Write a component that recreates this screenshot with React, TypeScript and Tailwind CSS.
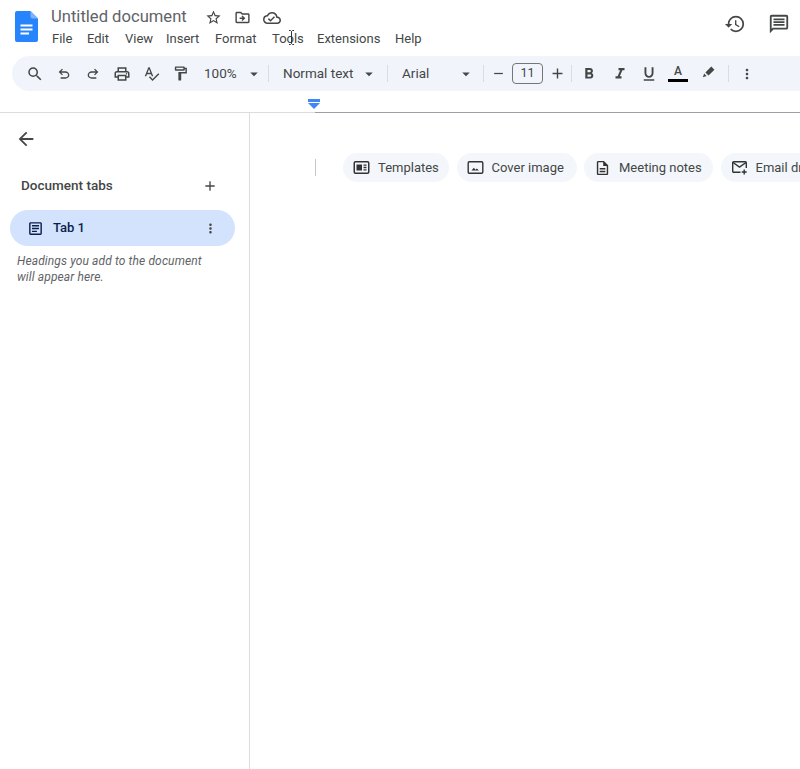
import React from "react";
import {
  MdStarBorder, MdOutlineDriveFileMove, MdOutlineCloudDone, MdHistory, MdOutlineMessage, MdSearch,
  MdOutlinePrint, MdOutlineSpellcheck, MdOutlineFormatPaint, MdArrowDropDown, MdRemove, MdAdd, MdFormatBold,
  MdFormatItalic, MdFormatUnderlined, MdMoreVert, MdArrowBack, MdOutlineArticle, MdOutlineDescription,
} from "react-icons/md";

const Sep = ({ className = "" }: { className?: string }) => <div className={`w-px h-[17px] bg-[#dadce0] shrink-0 ${className}`} />;

function Tool({ children, w = "w-[29px]" }: { children: React.ReactNode; w?: string }) {
  return <div className={`${w} h-[35px] shrink-0 flex items-center justify-center text-[#444746]`}>{children}</div>;
}

function Chip({ icon, label, w }: { icon: React.ReactNode; label: string; w: string }) {
  return (
    <div className={`${w} h-[29px] shrink-0 rounded-full bg-[#f3f6fb] flex items-center pl-[10px] gap-[8px] text-[#444746] text-[13px] whitespace-nowrap`}>
      <span className="w-[17px] flex justify-center shrink-0">{icon}</span>
      {label}
    </div>
  );
}

const UndoIcon = () => (
  <svg width="16" height="16" viewBox="0 -960 960 960" fill="#444746">
    <path d="M280-200v-80h284q63 0 109.5-40T720-420q0-60-46.5-100T564-560H312l104 104-56 56-200-200 200-200 56 56-104 104h252q97 0 166.5 63T800-420q0 94-69.5 157T564-200H280Z" />
  </svg>
);
const RedoIcon = () => (
  <svg width="16" height="16" viewBox="0 -960 960 960" fill="#444746">
    <path d="M396-200q-97 0-166.5-63T160-420q0-94 69.5-157T396-640h252L544-744l56-56 200 200-200 200-56-56 104-104H396q-63 0-109.5 40T240-420q0 60 46.5 100T396-280h284v80H396Z" />
  </svg>
);
const TemplateIcon = () => (
  <svg width="17" height="17" viewBox="0 0 17 17" fill="none" stroke="#333" strokeWidth="1.5">
    <rect x="1.25" y="2.75" width="14.5" height="11.5" rx="1.2" />
    <rect x="3.5" y="5.5" width="5.5" height="6" fill="#333" stroke="none" />
    <path d="M10.5 6.2h3M10.5 8.5h3M10.5 10.8h3" strokeWidth="1.3" />
  </svg>
);
const CoverIcon = () => (
  <svg width="17" height="17" viewBox="0 0 17 17" fill="none" stroke="#333" strokeWidth="1.4">
    <rect x="1.2" y="2.7" width="14.6" height="11.6" rx="1.2" />
    <path d="M4.5 11.6l2.3-2.8 1.7 2 1.3-1.3 2.2 2.1z" fill="#333" stroke="none" />
  </svg>
);
const EmailIcon = () => (
  <svg width="17" height="17" viewBox="0 0 17 17" fill="none" stroke="#333" strokeWidth="1.4">
    <path d="M9.5 13.3H2.7a1 1 0 0 1-1-1V3.7a1 1 0 0 1 1-1h11.6a1 1 0 0 1 1 1V9" />
    <path d="M2 3.5l6.5 4.6L15 3.5" />
    <path d="M13.2 10.5v5M10.7 13h5" />
  </svg>
);

export default function App() {
  const menus: [string, string][] = [["File", "w-[35px]"], ["Edit", "w-[38px]"], ["View", "w-[41px]"], ["Insert", "w-[49px]"], ["Format", "w-[57px]"], ["Tools", "w-[45px]"], ["Extensions", "w-[78px]"], ["Help", "w-[40px]"]];
  return (
    <div className="relative w-[800px] h-[769px] overflow-hidden bg-white flex flex-col font-['Roboto',sans-serif]">
      {/* Header */}
      <header className="h-[56px] shrink-0 flex">
        <div className="w-[51px] shrink-0 pl-[15px] pt-[11px]">
          <svg width="23" height="31" viewBox="0 0 23 31">
            <path d="M2 0h13.5L23 7.5V29a2 2 0 0 1-2 2H2a2 2 0 0 1-2-2V2a2 2 0 0 1 2-2z" fill="#2684fc" />
            <path d="M15.5 0L23 7.5h-5.5a2 2 0 0 1-2-2z" fill="#7fb2f8" />
            <path d="M5.5 14.5h12M5.5 18.5h12M5.5 22.5h8.5" stroke="#fff" strokeWidth="1.8" />
          </svg>
        </div>
        <div className="flex-1 flex flex-col pt-[7px]">
          <div className="flex items-center h-[21px]">
            <span className="w-[148px] text-[16.6px] text-[#5f6368] whitespace-nowrap">Untitled document</span>
            <span className="w-[29px] flex justify-center text-[#444746]"><MdStarBorder size={17} /></span>
            <span className="w-[29px] flex justify-center text-[#444746]"><MdOutlineDriveFileMove size={17} /></span>
            <span className="w-[29px] flex justify-center text-[#444746]"><MdOutlineCloudDone size={18} /></span>
          </div>
          <nav className="flex mt-[2px] h-[17px] pl-[1px] text-[13px] text-[#444746] items-center">
            {menus.map(([m, w]) => <span key={m} className={w}>{m}</span>)}
          </nav>
        </div>
        <div className="flex pt-[13px] text-[#444746] pr-[10px] gap-[22px]">
          <MdHistory size={22} />
          <MdOutlineMessage size={22} />
        </div>
      </header>

      {/* Toolbar */}
      <div className="ml-[12px] h-[35px] shrink-0 rounded-l-full bg-[#f1f5fb] flex items-center pl-[8.5px] text-[13.5px] text-[#444746]">
        <Tool><MdSearch size={18} /></Tool>
        <Tool><UndoIcon /></Tool>
        <Tool><RedoIcon /></Tool>
        <Tool><MdOutlinePrint size={18} /></Tool>
        <Tool><MdOutlineSpellcheck size={17} /></Tool>
        <Tool><MdOutlineFormatPaint size={17} /></Tool>
        <div className="w-[41px] ml-[9.5px] shrink-0">100%</div>
        <Tool w="w-[18px]"><MdArrowDropDown size={18} /></Tool>
        <Sep className="ml-[5px]" />
        <div className="w-[76px] ml-[14px] shrink-0">Normal text</div>
        <Tool w="w-[20px]"><MdArrowDropDown size={18} /></Tool>
        <Sep className="ml-[8px]" />
        <div className="w-[54px] ml-[14px] shrink-0">Arial</div>
        <Tool w="w-[20px]"><MdArrowDropDown size={18} /></Tool>
        <Sep className="ml-[7px]" />
        <Tool w="w-[28px]"><MdRemove size={15} /></Tool>
        <div className="w-[31px] h-[21px] shrink-0 border border-[#747775] rounded-[4px] flex items-center justify-center text-[12.5px]">11</div>
        <Tool w="w-[28px]"><MdAdd size={17} /></Tool>
        <Sep />
        <Tool w="w-[33px]"><MdFormatBold size={18} /></Tool>
        <Tool><MdFormatItalic size={18} /></Tool>
        <Tool><MdFormatUnderlined size={18} /></Tool>
        <Tool w="w-[30px]">
          <div className="flex flex-col items-center">
            <span className="text-[12px] leading-[13px] font-medium">A</span>
            <span className="w-[20px] h-[3px] bg-black mt-[1px]" />
          </div>
        </Tool>
        <Tool w="w-[31px]">
          <svg width="15" height="15" viewBox="0 0 24 24" className="-mt-[4px]" fill="#444746"><path d="M3 21l2-6 4 4-6 2zM7 13.5L16.5 4l5 5L12 18.5l-5-5z" /></svg>
        </Tool>
        <Sep className="ml-[4px]" />
        <Tool w="w-[35px]"><MdMoreVert size={16} /></Tool>
      </div>

      {/* Ruler */}
      <div className="h-[22px] shrink-0 flex flex-col justify-end">
        <div className="flex justify-start pl-[308px] pb-[3px]">
          <svg width="12" height="10" viewBox="0 0 12 10" fill="#4285f4"><rect x="0" y="0" width="12" height="3" /><path d="M0 4h12L6 10z" /></svg>
        </div>
        <div className="flex h-px">
          <div className="w-[315px] bg-[#dadce0]" />
          <div className="flex-1 bg-[#9aa0a6]" />
        </div>
      </div>

      {/* Body */}
      <div className="flex-1 flex min-h-0">
        <aside className="w-[250px] shrink-0 border-r border-[#dadce0] flex flex-col">
          <div className="h-[51px] pl-[15px] pt-[15px] text-[#444746]"><MdArrowBack size={22} /></div>
          <div className="mt-[12.5px] h-[18px] pl-[21px] pr-[31px] flex items-center justify-between text-[13.5px] font-medium text-[#444746]">
            <span>Document tabs</span>
            <MdAdd size={16} />
          </div>
          <div className="mt-[15.5px] mx-[10px] h-[36px] w-[225px] rounded-full bg-[#d3e3fd] flex items-center pl-[17px] pr-[17px] text-[#0b1f4b]">
            <MdOutlineArticle size={17} />
            <span className="ml-[9px] text-[13px] font-medium flex-1">Tab 1</span>
            <MdMoreVert size={15} className="text-[#444746]" />
          </div>
          <p className="mt-[8px] pl-[17px] text-[12px] leading-[15.5px] italic text-[#5f6368] tracking-[0.12px]">
            Headings you add to the document<br />will appear here.
          </p>
        </aside>
        <main className="flex-1 min-w-0 overflow-hidden">
          <div className="mt-[40px] flex items-center pl-[65px]">
            <div className="w-px h-[17px] bg-[#c4c7c5] shrink-0 mr-[27px]" />
            <div className="flex gap-[7.5px]">
              <Chip icon={<TemplateIcon />} label="Templates" w="w-[106px]" />
              <Chip icon={<CoverIcon />} label="Cover image" w="w-[120px]" />
              <Chip icon={<MdOutlineDescription size={18} className="text-[#333]" />} label="Meeting notes" w="w-[129px]" />
              <Chip icon={<EmailIcon />} label="Email draft" w="w-[110px]" />
            </div>
          </div>
        </main>
      </div>

      {/* Text cursor over the menu */}
      <svg className="absolute left-[288px] top-[30px]" width="7" height="15" viewBox="0 0 7 15" fill="none" stroke="#333" strokeWidth="1">
        <path d="M1 .5h1.5l1 1 1-1H6M3.5 1.5v12M1 14.5h1.5l1-1 1 1H6" />
      </svg>
    </div>
  );
}
